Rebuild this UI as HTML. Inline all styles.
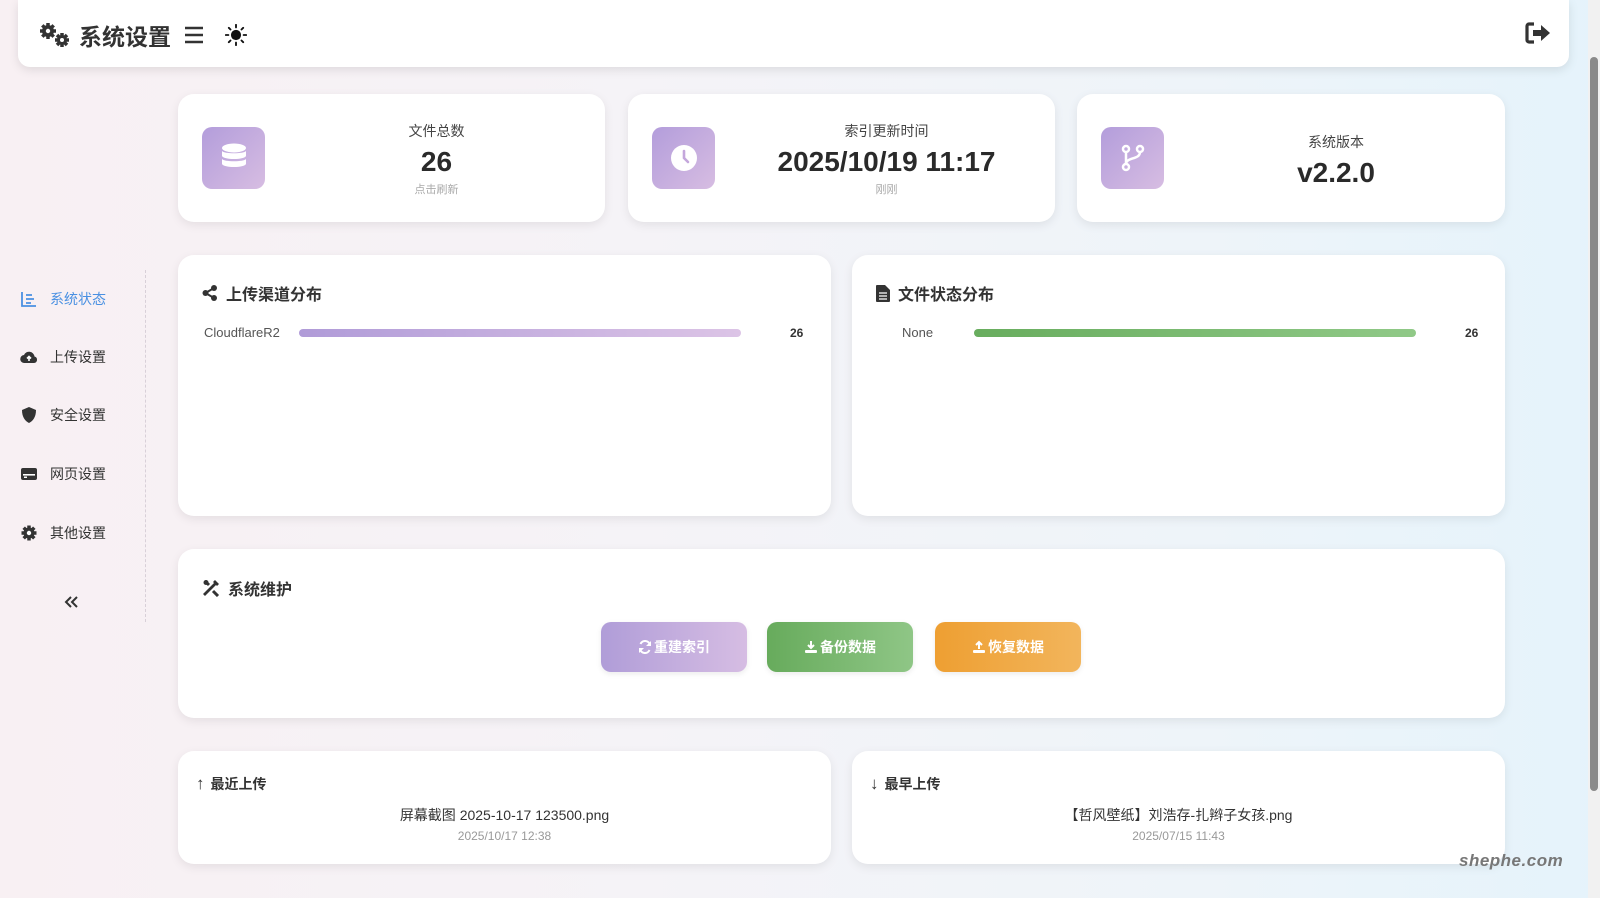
<!DOCTYPE html>
<html><head><meta charset="utf-8"><style>
*{box-sizing:border-box;margin:0;padding:0}
body{width:1600px;height:898px;overflow:hidden;font-family:"Liberation Sans","Noto Sans CJK SC",sans-serif;color:#333;background:linear-gradient(90deg,#f8f0f3 0%,#f5f3f7 40%,#eef4f9 75%,#e5f3fb 100%);position:relative}
.abs{position:absolute}
.card{position:absolute;background:#fff;border-radius:16px;box-shadow:0 3px 10px rgba(0,0,0,.08)}
.hdr{left:18px;top:0;width:1551px;height:67px;background:#fff;border-radius:0 0 12px 12px;box-shadow:0 3px 10px rgba(0,0,0,.1)}
.ttl{left:39px;top:18px;font-size:23px;font-weight:bold;color:#333;display:flex;align-items:center;gap:8px}
.ic{position:absolute;left:24px;top:33px;width:63px;height:62px;border-radius:10px;background:linear-gradient(135deg,#b39ddb,#d7bde2);display:flex;align-items:center;justify-content:center}
.sc{text-align:center;position:absolute;left:90px;right:0}
.lab{font-size:14px;color:#444}
.val{font-size:28px;font-weight:bold;color:#2a2a2a;margin-top:5px}
.sub{font-size:11px;color:#aaa;margin-top:3px}
.nav{position:absolute;left:20px;display:flex;align-items:center;font-size:14px;color:#333}
.nav svg{width:18px;height:18px;margin-right:12px}
.h3{position:absolute;font-size:16px;font-weight:bold;color:#333;display:flex;align-items:center;gap:8px}
.btn{position:absolute;top:622px;width:146px;height:50px;border-radius:10px;color:#fff;font-weight:bold;font-size:14px;display:flex;align-items:center;justify-content:center;gap:2px;box-shadow:0 2px 6px rgba(0,0,0,.08)}
</style></head><body>
<div class="abs hdr"></div>
<div class="abs ttl">
<svg width="32" height="26" viewBox="0 0 32 26"><g fill="#333"><circle cx="9" cy="9" r="6"/><g stroke="#333" stroke-width="3.5"><path d="M9 1v16M1 9h16M3.3 3.3l11.4 11.4M14.7 3.3L3.3 14.7"/><path d="M23 11v14M16 18h14M18 13l10 10M28 13l-10 10"/></g><circle cx="23" cy="18" r="5"/></g><circle cx="9" cy="9" r="2.2" fill="#fff"/><circle cx="23" cy="18" r="2" fill="#fff"/></svg>
<span>系统设置</span>
<svg width="22" height="22" viewBox="0 0 22 22" style="margin-left:4px"><path d="M2 4h18M2 11h18M2 18h18" stroke="#333" stroke-width="2.6"/></svg>
<svg width="22" height="22" viewBox="0 0 26 26" style="margin-left:12px"><circle cx="13" cy="13" r="6" fill="#111"/><g stroke="#111" stroke-width="2.2" stroke-linecap="round"><path d="M13 1v3M13 22v3M1 13h3M22 13h3M4.5 4.5l2 2M19.5 19.5l2 2M4.5 21.5l2-2M19.5 6.5l2-2"/></g></svg>
</div>
<svg class="abs" style="left:1524px;top:21px" width="28" height="24" viewBox="0 0 28 24"><path d="M10 3H5a2 2 0 0 0-2 2v14a2 2 0 0 0 2 2h5" fill="none" stroke="#333" stroke-width="3.2"/><path d="M9 9h8V4l9 8-9 8v-5H9z" fill="#333"/></svg>

<div class="card" style="left:178px;top:94px;width:427px;height:128px">
<div class="ic"><svg width="26" height="30" viewBox="0 0 26 30"><g fill="#fff"><ellipse cx="13" cy="5" rx="12" ry="4.5"/><path d="M1 8c2 3 22 3 24 0v5c-2 4-22 4-24 0z"/><path d="M1 16c2 3 22 3 24 0v5c-2 4-22 4-24 0z"/></g></svg></div>
<div class="sc" style="top:27px"><div class="lab">文件总数</div><div class="val">26</div><div class="sub">点击刷新</div></div></div>
<div class="card" style="left:628px;top:94px;width:427px;height:128px">
<div class="ic"><svg width="28" height="28" viewBox="0 0 28 28"><circle cx="14" cy="14" r="13" fill="#fff"/><path d="M14 7v7l4 4" stroke="#c4a7dc" stroke-width="2.6" fill="none" stroke-linecap="round"/></svg></div>
<div class="sc" style="top:27px"><div class="lab">索引更新时间</div><div class="val">2025/10/19 11:17</div><div class="sub">刚刚</div></div></div>
<div class="card" style="left:1077px;top:94px;width:428px;height:128px">
<div class="ic"><svg width="24" height="28" viewBox="0 0 24 28"><g fill="none" stroke="#fff" stroke-width="2.5"><circle cx="5" cy="5" r="3"/><circle cx="5" cy="23" r="3"/><circle cx="19" cy="5" r="3"/><path d="M5 8v12M19 8c0 8-14 5-14 12"/></g></svg></div>
<div class="sc" style="top:38px"><div class="lab">系统版本</div><div class="val">v2.2.0</div></div></div>

<div class="nav" style="top:289px;color:#4a90e2"><svg viewBox="0 0 18 18"><path d="M2 2v14h14M6 5h6M6 9h8M6 13h5" stroke="#4a90e2" stroke-width="1.8" fill="none"/></svg>系统状态</div>
<div class="nav" style="top:347px"><svg viewBox="0 0 18 18"><path d="M4.5 15a4 4 0 0 1-.5-8 5.5 5.5 0 0 1 10.5 1.5A3.3 3.3 0 0 1 14 15z" fill="#333"/><path d="M9 13V9M7 10.5l2-2 2 2" stroke="#fff" stroke-width="1.6" fill="none"/></svg>上传设置</div>
<div class="nav" style="top:405px"><svg viewBox="0 0 18 18"><path d="M9 1l7 3c0 7-3 11-7 13C5 15 2 11 2 4z" fill="#333"/></svg>安全设置</div>
<div class="nav" style="top:464px"><svg viewBox="0 0 18 18"><rect x="1" y="3" width="16" height="12" rx="2" fill="#333"/><rect x="3" y="9" width="12" height="1.6" fill="#fff"/><rect x="4" y="11.5" width="3" height="1.5" fill="#fff"/></svg>网页设置</div>
<div class="nav" style="top:523px"><svg viewBox="0 0 18 18"><g stroke="#333" stroke-width="3.5"><path d="M9 1.5v15M1.5 9h15M3.7 3.7l10.6 10.6M14.3 3.7L3.7 14.3"/></g><circle cx="9" cy="9" r="5.5" fill="#333"/><circle cx="9" cy="9" r="2.2" fill="#fff"/></svg>其他设置</div>
<svg class="abs" style="left:63px;top:595px" width="16" height="14" viewBox="0 0 16 14"><path d="M8 2L3 7l5 5M14 2L9 7l5 5" stroke="#333" stroke-width="2" fill="none"/></svg>
<div class="abs" style="left:145px;top:270px;height:352px;border-left:1px dashed #d8d0d8"></div>

<div class="card" style="left:178px;top:255px;width:653px;height:261px">
<div class="h3" style="left:24px;top:26px"><svg width="16" height="16" viewBox="0 0 16 16"><g fill="#333"><circle cx="12" cy="3" r="3"/><circle cx="12" cy="13" r="3"/><circle cx="3.5" cy="8" r="3"/></g><path d="M12 3L3.5 8l8.5 5" stroke="#333" stroke-width="2" fill="none"/></svg>上传渠道分布</div>
<div class="abs" style="left:26px;top:70px;font-size:13px;color:#555">CloudflareR2</div>
<div class="abs" style="left:121px;top:74px;width:442px;height:8px;border-radius:4px;background:linear-gradient(90deg,#b09bd8,#dcc4e6)"></div>
<div class="abs" style="left:612px;top:71px;font-size:12px;font-weight:bold">26</div>
</div>
<div class="card" style="left:852px;top:255px;width:653px;height:261px">
<div class="h3" style="left:24px;top:26px"><svg width="14" height="17" viewBox="0 0 14 17"><path d="M0 1a1 1 0 0 1 1-1h8l5 5v11a1 1 0 0 1-1 1H1a1 1 0 0 1-1-1z" fill="#333"/><path d="M3 8h8M3 11h8M3 14h8" stroke="#fff" stroke-width="1.3"/></svg>文件状态分布</div>
<div class="abs" style="left:50px;top:70px;font-size:13px;color:#555">None</div>
<div class="abs" style="left:122px;top:74px;width:442px;height:8px;border-radius:4px;background:linear-gradient(90deg,#68ad5e,#90c987)"></div>
<div class="abs" style="left:613px;top:71px;font-size:12px;font-weight:bold">26</div>
</div>

<div class="card" style="left:178px;top:549px;width:1327px;height:169px">
<div class="h3" style="left:24px;top:27px"><svg width="18" height="18" viewBox="0 0 18 18"><path d="M2 16L14 4M12 2l4 4" stroke="#333" stroke-width="2.8" fill="none"/><path d="M3 2l4 4M11 12l5 5" stroke="#333" stroke-width="3"/><circle cx="4" cy="3.5" r="2.5" fill="#333"/></svg>系统维护</div>
</div>
<div class="btn" style="left:601px;background:linear-gradient(90deg,#b09dd8,#d6bde3)"><svg width="14" height="14" viewBox="0 0 14 14"><path d="M12 5A5 5 0 0 0 2.5 4M2 9a5 5 0 0 0 9.5 1" stroke="#fff" stroke-width="2" fill="none"/><path d="M13 1v5H8zM1 13V8h5z" fill="#fff"/></svg>重建索引</div>
<div class="btn" style="left:767px;background:linear-gradient(90deg,#67ab5c,#8fc686)"><svg width="14" height="14" viewBox="0 0 14 14"><path d="M7 1v7M4 5l3 3 3-3" stroke="#fff" stroke-width="2" fill="none"/><rect x="1" y="10" width="12" height="3" rx="1" fill="#fff"/></svg>备份数据</div>
<div class="btn" style="left:935px;background:linear-gradient(90deg,#ee9f32,#f2b55c)"><svg width="14" height="14" viewBox="0 0 14 14"><path d="M7 9V2M4 5l3-3 3 3" stroke="#fff" stroke-width="2" fill="none"/><rect x="1" y="10" width="12" height="3" rx="1" fill="#fff"/></svg>恢复数据</div>

<div class="card" style="left:178px;top:751px;width:653px;height:113px">
<div class="h3" style="left:18px;top:23px;font-size:14px;gap:6px"><span style="font-size:17px">↑</span>最近上传</div>
<div class="abs" style="left:0;right:0;top:54px;text-align:center;font-size:14px;color:#333">屏幕截图 2025-10-17 123500.png</div>
<div class="abs" style="left:0;right:0;top:78px;text-align:center;font-size:12px;color:#999">2025/10/17 12:38</div>
</div>
<div class="card" style="left:852px;top:751px;width:653px;height:113px">
<div class="h3" style="left:18px;top:23px;font-size:14px;gap:6px"><span style="font-size:17px">↓</span>最早上传</div>
<div class="abs" style="left:0;right:0;top:54px;text-align:center;font-size:14px;color:#333">【哲风壁纸】刘浩存-扎辫子女孩.png</div>
<div class="abs" style="left:0;right:0;top:78px;text-align:center;font-size:12px;color:#999">2025/07/15 11:43</div>
</div>
<div class="abs" style="left:1459px;top:851px;font-size:17px;font-weight:bold;font-style:italic;color:#777;letter-spacing:.5px">shephe.com</div>

<div class="abs" style="left:1588px;top:0;width:12px;height:898px;background:#f1f1f1"></div>
<div class="abs" style="left:1590px;top:57px;width:8px;height:734px;border-radius:4px;background:#8a8a8a"></div>
</body></html>
